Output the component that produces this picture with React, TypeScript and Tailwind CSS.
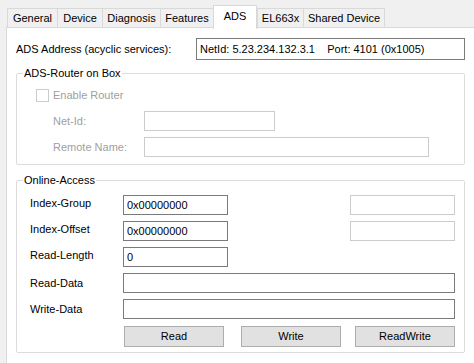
import React from "react";

const tabs = [
  { t: "General", w: 50 },
  { t: "Device", w: 45 },
  { t: "Diagnosis", w: 58 },
  { t: "Features", w: 53 },
  { t: "ADS", w: 44, active: true },
  { t: "EL663x", w: 46 },
  { t: "Shared Device", w: 82, last: true },
];

function Box({ w, value, disabled }: { w?: number; value?: string; disabled?: boolean }) {
  return (
    <div
      className={
        "h-[20px] flex items-center px-[3px] bg-white border " +
        (disabled ? "border-[#cccccc]" : "border-[#7a7a7a]") +
        (w ? "" : " flex-1")
      }
      style={w ? { width: w } : undefined}
    >
      {value}
    </div>
  );
}

export default function App() {
  return (
    <div
      className="w-[474px] h-[363px] bg-[#f0f0f0] overflow-hidden flex flex-col text-[11px] text-black leading-none"
      style={{ fontFamily: '"Liberation Sans", Arial, sans-serif' }}
    >
      <div className="flex items-end pl-[7px] h-[28px] relative z-10">
        {tabs.map((tab) =>
          tab.active ? (
            <div
              key={tab.t}
              className="h-[24px] -mb-[1px] bg-white border-l border-r border-t border-[#d9d9d9] flex items-center justify-center pb-[2px]"
              style={{ width: tab.w }}
            >
              {tab.t}
            </div>
          ) : (
            <div
              key={tab.t}
              className={
                "h-[19px] mb-[1px] bg-[#f0f0f0] border-l border-t border-[#d9d9d9] flex items-center justify-center" +
                (tab.last ? " border-r" : "")
              }
              style={{ width: tab.w }}
            >
              {tab.t}
            </div>
          )
        )}
      </div>
      <div className="ml-[6px] -mt-[1px] flex-1 bg-white border-l border-t border-[#d9d9d9] pl-[9px] pr-[9px] flex flex-col">
        <div className="mt-[10px] flex items-center h-[22px]">
          <div className="w-[180px]">ADS Address (acyclic services):</div>
          <div className="flex-1 h-[22px] border border-[#7a7a7a] flex items-center px-[3px]">
            NetId: 5.23.234.132.3.1&nbsp;&nbsp;&nbsp;&nbsp;Port: 4101 (0x1005)
          </div>
        </div>

        <div className="mt-[13px] h-[92px] border border-[#dcdcdc] rounded-[2px] relative flex flex-col">
          <span className="absolute top-[-6px] left-[6px] bg-white px-[1px]">ADS-Router on Box</span>
          <div className="mt-[15px] ml-[19px] flex items-center h-[13px]">
            <div className="w-[13px] h-[13px] border border-[#cccccc] bg-white" />
            <span className="ml-[4px] text-[#a0a0a0]">Enable Router</span>
          </div>
          <div className="mt-[9px] flex items-center h-[20px] pl-[36px]">
            <div className="w-[91px] text-[#a0a0a0]">Net-Id:</div>
            <Box w={131} disabled />
          </div>
          <div className="mt-[6px] flex items-center h-[20px] pl-[36px]">
            <div className="w-[91px] text-[#a0a0a0]">Remote Name:</div>
            <Box w={285} disabled />
          </div>
        </div>

        <div className="mt-[15px] h-[173px] border border-[#dcdcdc] rounded-[2px] relative flex flex-col pl-[13px] pr-[9px] pt-[14px] gap-[6px]">
          <span className="absolute top-[-6px] left-[6px] bg-white px-[1px]">Online-Access</span>
          <div className="flex items-center h-[20px]">
            <div className="w-[93px] -mt-[3px]">Index-Group</div>
            <Box w={105} value="0x00000000" />
            <div className="ml-auto">
              <Box w={105} disabled />
            </div>
          </div>
          <div className="flex items-center h-[20px]">
            <div className="w-[93px] -mt-[3px]">Index-Offset</div>
            <Box w={105} value="0x00000000" />
            <div className="ml-auto">
              <Box w={105} disabled />
            </div>
          </div>
          <div className="flex items-center h-[20px]">
            <div className="w-[93px] -mt-[3px]">Read-Length</div>
            <Box w={105} value="0" />
          </div>
          <div className="flex items-center h-[20px]">
            <div className="w-[93px]">Read-Data</div>
            <Box />
          </div>
          <div className="flex items-center h-[20px]">
            <div className="w-[93px]">Write-Data</div>
            <Box />
          </div>
          <div className="flex items-center h-[21px] mt-[1px] pl-[94px]">
            <div className="w-[100px] h-[21px] bg-[#e1e1e1] border border-[#adadad] flex items-center justify-center">Read</div>
            <div className="w-[100px] h-[21px] ml-[17px] bg-[#e1e1e1] border border-[#adadad] flex items-center justify-center">Write</div>
            <div className="w-[100px] h-[21px] ml-[14px] bg-[#e1e1e1] border border-[#adadad] flex items-center justify-center">ReadWrite</div>
          </div>
        </div>
      </div>
    </div>
  );
}
